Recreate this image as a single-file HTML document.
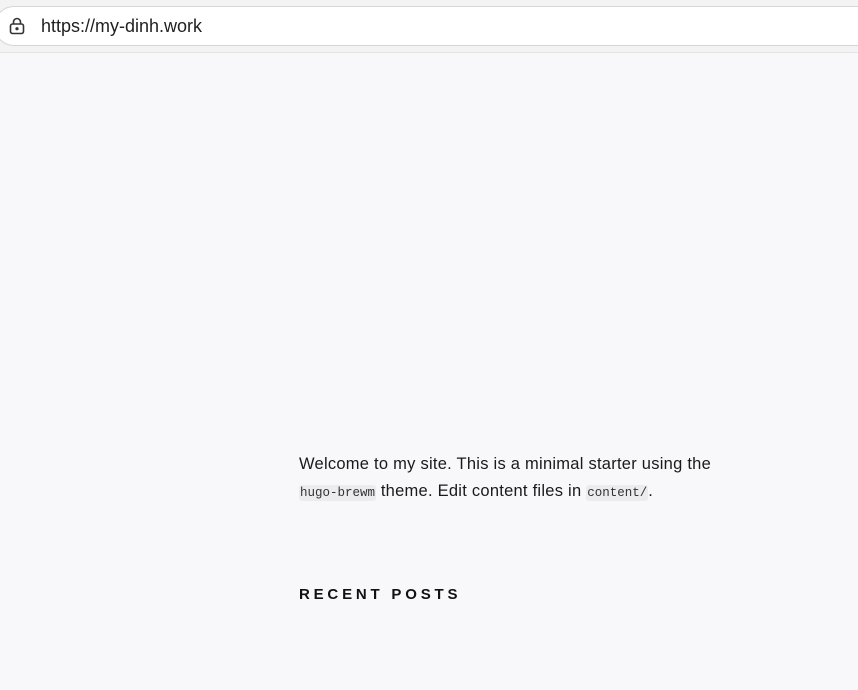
<!DOCTYPE html>
<html><head><meta charset="utf-8"><style>
html,body{margin:0;padding:0;width:858px;height:690px;overflow:hidden;background:#f8f8fa;font-family:"Liberation Sans",sans-serif;}
.bar{position:absolute;left:0;top:0;width:858px;height:52px;background:#f3f3f3;border-bottom:1px solid #e4e4e4;}
.url{position:absolute;left:-6px;top:6px;width:880px;height:38px;background:#fff;border:1px solid #d6d6d6;border-radius:20px;}
.url span{position:absolute;left:46px;top:9px;font-size:18px;color:#1f1f1f;}
.p{position:absolute;left:299px;top:451px;width:470px;font-size:16.5px;letter-spacing:0.25px;line-height:27px;color:#1a1a1a;}
code{font-family:"Liberation Mono",monospace;font-size:12.5px;letter-spacing:0;background:#ececee;border-radius:3px;padding:1px 1px;color:#333;white-space:nowrap;}
h2{position:absolute;left:299px;top:586px;margin:0;font-size:15px;font-weight:bold;letter-spacing:3.8px;color:#111;}
</style></head><body>
<div class="bar"><div class="url">
<svg style="position:absolute;left:13px;top:10px" width="18" height="18" viewBox="0 0 18 18" fill="none" stroke="#333" stroke-width="1.6"><rect x="2.5" y="7" width="13" height="9.5" rx="2"/><path d="M5.5 7V5a3.5 3.5 0 0 1 7 0v2"/><circle cx="9" cy="11.7" r="0.8" fill="#333"/></svg>
<span>https://my-dinh.work</span></div></div>
<div class="p">Welcome to my site. This is a minimal starter using the<br><code>hugo-brewm</code> theme. Edit content files in <code>content/</code>.</div>
<h2>RECENT POSTS</h2>
</body></html>
